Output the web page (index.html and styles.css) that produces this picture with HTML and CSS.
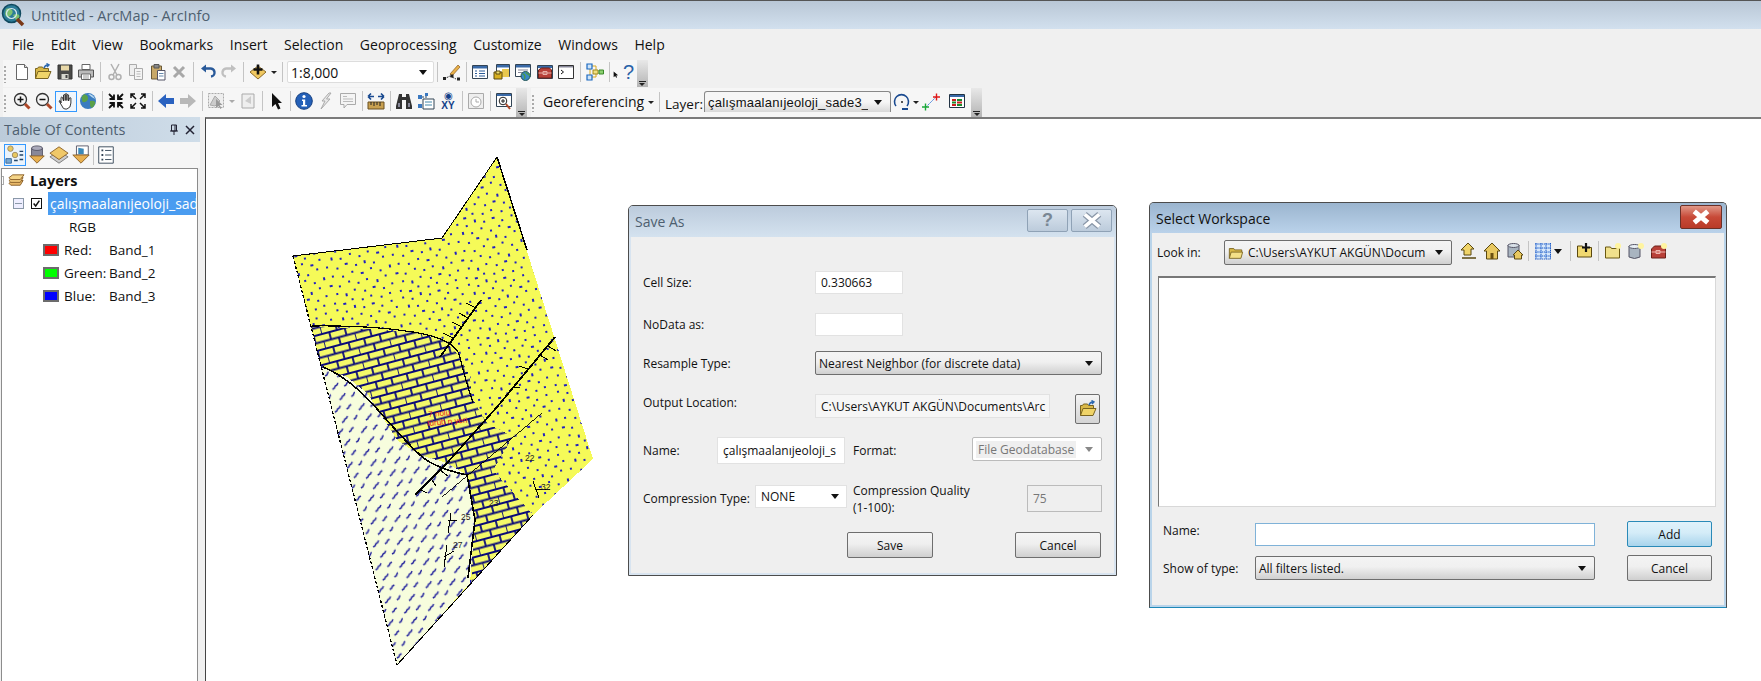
FILE: index.html
```html
<!DOCTYPE html>
<html lang="en">
<head>
<meta charset="utf-8">
<title>Untitled - ArcMap - ArcInfo</title>
<link rel="stylesheet" href="styles.css">
</head>
<body>
<svg class="defs" width="0" height="0" aria-hidden="true">
  <symbol id="i-new" viewBox="0 0 18 18"><path d="M3.500 1.500h8l3 3v12h-11z" fill="#fff" stroke="#666"/><path d="M11.500 1.500v3h3" fill="#ddd" stroke="#666"/></symbol>
  <symbol id="i-open" viewBox="0 0 18 18"><path d="M1.500 15.500v-10h2l1-1.500h4l1 1.500h5v3" fill="#d8b848" stroke="#7a6420"/><path d="M1.500 15.500l2.500-7h13l-3 7z" fill="#f0d468" stroke="#7a6420"/><path d="M10 5q1-3 4-3M12.500 .5l2.500 1.500-2 2" fill="none" stroke="#2c68b0" stroke-width="1.400"/></symbol>
  <symbol id="i-save" viewBox="0 0 18 18"><path d="M2 2h14v14H2z" fill="#4a4a48" stroke="#333"/><path d="M5 2.500h8v5H5z" fill="#e8d8a8"/><path d="M5.500 11h7v5h-7z" fill="#d8d8d0"/><path d="M9.500 12h2v3h-2z" fill="#444"/></symbol>
  <symbol id="i-print" viewBox="0 0 18 18"><path d="M5 1.500h8v5H5z" fill="#fff" stroke="#666"/><path d="M1.500 7h15v7h-15z" fill="#bbb" stroke="#555"/><path d="M4.500 11h9v5.500h-9z" fill="#fff" stroke="#666"/><path d="M6 13h6M6 15h6" stroke="#999"/></symbol>
  <symbol id="i-cut" viewBox="0 0 18 18"><g fill="none" stroke="#b0b0b0" stroke-width="1.500"><path d="M5 1l6 11M13 1L7 12"/><circle cx="5.500" cy="14" r="2.500"/><circle cx="12.500" cy="14" r="2.500"/></g></symbol>
  <symbol id="i-copy" viewBox="0 0 18 18"><path d="M2.500 1.500h7v11h-7z" fill="#eee" stroke="#aaa"/><path d="M7.500 5.500h8v11h-8z" fill="#f4f4f4" stroke="#aaa"/><path d="M9.500 8.500h4M9.500 11h4M9.500 13.500h4" stroke="#bbb"/></symbol>
  <symbol id="i-paste" viewBox="0 0 18 18"><path d="M2.500 3h10v13h-10z" fill="#c8a868" stroke="#6a5a38"/><path d="M5 1.500h5V5H5z" fill="#888" stroke="#555"/><path d="M8.500 7.500h7.500v9.500H8.500z" fill="#fff" stroke="#556"/><path d="M10 10.500h4.500M10 13h4.500" stroke="#68a"/></symbol>
  <symbol id="i-del" viewBox="0 0 18 18"><path d="M4 4l10 10M14 4L4 14" stroke="#a8a8a8" stroke-width="3"/></symbol>
  <symbol id="i-undo" viewBox="0 0 18 18"><path d="M5 5.500h6a4 4 0 0 1 1 8" fill="none" stroke="#2a5a9a" stroke-width="2.400"/><path d="M7 1.500v8L2 5.500z" fill="#2a5a9a"/></symbol>
  <symbol id="i-redo" viewBox="0 0 18 18"><path d="M13 5.500H7a4 4 0 0 0-1 8" fill="none" stroke="#c0c0c0" stroke-width="2.400"/><path d="M11 1.500v8l5-4z" fill="#c0c0c0"/></symbol>
  <symbol id="i-add" viewBox="0 0 18 18"><path d="M1 9l8-6 8 6-8 7z" fill="#f0c860" stroke="#8a6a28"/><path d="M9 1.500v10M4.500 6.500h9" stroke="#111" stroke-width="2.600"/></symbol>
  <symbol id="i-edit" viewBox="0 0 18 18"><path d="M7 11l8-9 2 2-8 9z" fill="#e8b048" stroke="#8a5a20" stroke-width=".7"/><path d="M1 16l6-3 6 3" fill="none" stroke="#333" stroke-dasharray="2 1"/><path d="M0 14h3v3H0zM7.500 11.500h3v3h-3zM14 14.500h3v3h-3z" fill="#222"/></symbol>
  <symbol id="i-toc" viewBox="0 0 18 18"><path d="M1.500 2.500h15v13h-15z" fill="#fff" stroke="#345"/><path d="M2 3h14v2.500H2z" fill="#3a6aa8"/><path d="M4 8h2M8 8h6M4 10.500h2M8 10.500h6M4 13h2M8 13h6" stroke="#2a5a98"/></symbol>
  <symbol id="i-cat" viewBox="0 0 18 18"><path d="M3.500 1.500h13v12h-13z" fill="#fff" stroke="#345"/><path d="M4 2h12v2.500H4z" fill="#3a6aa8"/><path d="M9 6h7v8H9z" fill="#e8c850"/><path d="M1 9h8v7H1z" fill="#d8b020" stroke="#5a4a10"/><path d="M3 8h4v3H3z" fill="#f0e070" stroke="#5a4a10"/></symbol>
  <symbol id="i-search" viewBox="0 0 18 18"><path d="M1.500 1.500h15v12h-15z" fill="#fff" stroke="#345"/><path d="M2 2h14v2.500H2z" fill="#3a6aa8"/><path d="M4 7h10M4 9.500h6" stroke="#889"/><circle cx="11.500" cy="13" r="4.500" fill="#3a88c8" stroke="#255"/><path d="M8.500 11c2 0 3 2 2 5M12 9c0 2 3 2 4 4" stroke="#4a9a4a" stroke-width="1.400" fill="none"/></symbol>
  <symbol id="i-box" viewBox="0 0 18 18"><path d="M1.500 2.500h15v13h-15z" fill="#fff" stroke="#345"/><path d="M2 3h14v2H2z" fill="#3a6aa8"/><path d="M2.500 7l3-2h8l2 2v8h-13z" fill="#b84038" stroke="#6a2018"/><path d="M2.500 10h13M7 8.500h4v3H7z" stroke="#e8b0a8" fill="none"/></symbol>
  <symbol id="i-py" viewBox="0 0 18 18"><path d="M1.500 2.500h15v13h-15z" fill="#fff" stroke="#333"/><path d="M2 3h14v1.500H2z" fill="#889"/><path d="M4 7l2.500 2L4 11" fill="none" stroke="#111"/></symbol>
  <symbol id="i-model" viewBox="0 0 18 18"><path d="M4 5v8M4 3h6v6M4 14h6V9" fill="none" stroke="#d8a820"/><path d="M1 1h5v5H1zM1 12h5v5H1z" fill="#cfe4f8" stroke="#1a68c0" stroke-width="1.200"/><path d="M7 7h5v4H7z" fill="#f0e080" stroke="#a08820"/><path d="M13 7h4.500v4H13z" fill="#8cd070" stroke="#3a8a2a"/></symbol>
  <symbol id="i-help" viewBox="0 0 18 18"><path d="M1 5v9l2.500-2 1.500 3 1.500-.7-1.500-3 3-.3z" fill="#111"/></symbol>
  <symbol id="i-zin" viewBox="0 0 18 18"><circle cx="7.500" cy="7.500" r="6" fill="#f4f4f4" stroke="#333" stroke-width="1.300"/><path d="M4.500 7.500h6M7.500 4.500v6" stroke="#111" stroke-width="1.500"/><path d="M12 12l4.500 4.500" stroke="#b04828" stroke-width="3"/></symbol>
  <symbol id="i-zout" viewBox="0 0 18 18"><circle cx="7.500" cy="7.500" r="6" fill="#f4f4f4" stroke="#333" stroke-width="1.300"/><path d="M4.500 7.500h6" stroke="#111" stroke-width="1.500"/><path d="M12 12l4.500 4.500" stroke="#b04828" stroke-width="3"/></symbol>
  <symbol id="i-hand" viewBox="0 0 18 18"><path d="M4 11V5.500q1-1 1.500 0L6.500 9V3q1-1 1.700 0V8.500V2q1-1 1.700 0V8.500V3q1-1 1.700 0V9l.8-3q1-.8 1.500 0v5q0 5-4 6H8q-2 0-3-3L2 9q.7-1 1.500 0z" fill="#fff" stroke="#222" stroke-width=".9"/></symbol>
  <symbol id="i-globe" viewBox="0 0 18 18"><circle cx="9" cy="9" r="8" fill="#3a7cc0"/><path d="M5 2q4 1 4 4t-3 4T3 8 2 6zM11 9q4-1 5 1t-3 6q-2-1-2-3z" fill="#5aa048"/><path d="M9 2q5 0 7 5-4-2-7-5z" fill="#b8d8f0"/></symbol>
  <symbol id="i-fin" viewBox="0 0 18 18"><path d="M2 2l5 5M7 2.500V7H2.500M16 2l-5 5M11 2.500V7h4.500M2 16l5-5M7 15.500V11H2.500M16 16l-5-5M11 15.500V11h4.500" fill="none" stroke="#111" stroke-width="1.800"/></symbol>
  <symbol id="i-fout" viewBox="0 0 18 18"><path d="M7 7L2 2M2 6V2h4M11 7l5-5M16 6V2h-4M7 11l-5 5M2 12v4h4M11 11l5 5M16 12v4h-4" fill="none" stroke="#111" stroke-width="1.500"/></symbol>
  <symbol id="i-back" viewBox="0 0 18 18"><path d="M1 9l8-7v4h8v6H9v4z" fill="#2a62c0"/></symbol>
  <symbol id="i-fwd" viewBox="0 0 18 18"><path d="M17 9L9 2v4H1v6h8v4z" fill="#b8b8b8"/></symbol>
  <symbol id="i-sel" viewBox="0 0 18 18"><path d="M1.500 1.500h15v14h-15z" fill="#eee" stroke="#aaa" stroke-dasharray="2 1"/><path d="M3 13l5-9 5 5-5 5z" fill="#ccc" stroke="#aaa"/><path d="M9 7v9l2.500-2 2 3 1-1-2-3h3z" fill="#999"/></symbol>
  <symbol id="i-gbox" viewBox="0 0 18 18"><path d="M3 2h12v14H3z" fill="#eee" stroke="#aaa"/><path d="M6 9l6-5v8z" fill="#ccc"/></symbol>
  <symbol id="i-arrow" viewBox="0 0 18 18"><path d="M5 1v14l3.500-3 2.500 5.500 2.500-1-2.500-5.500H15z" fill="#111"/></symbol>
  <symbol id="i-info" viewBox="0 0 18 18"><circle cx="9" cy="9" r="8.300" fill="#2460b8" stroke="#164080"/><circle cx="9" cy="4.500" r="1.600" fill="#fff"/><path d="M7 7.500h3.200V13H12v1.500H6.500V13H8V9H7z" fill="#fff"/></symbol>
  <symbol id="i-flash" viewBox="0 0 18 18"><path d="M12 1L5 9h3l-4 8 9-10H9.500L14 1z" fill="#e8e8e8" stroke="#aaa"/></symbol>
  <symbol id="i-html" viewBox="0 0 18 18"><path d="M1.500 1.500h15v11H8l-3 3.500v-3.500H1.500z" fill="#f4f4f4" stroke="#aaa"/><path d="M4 4.500h4M4 7h10M4 9.500h10" stroke="#bbb"/></symbol>
  <symbol id="i-measure" viewBox="0 0 18 18"><path d="M1 4.500h6M1 4.500l3-3M1 4.500l3 3M17 4.500h-6M17 4.500l-3-3M17 4.500l-3 3" fill="none" stroke="#1a4a90" stroke-width="1.700"/><path d="M1 10h16v7H1z" fill="#c8a050" stroke="#6a5020"/><path d="M4 10v3M7 10v4M10 10v3M13 10v4" stroke="#222"/></symbol>
  <symbol id="i-find" viewBox="0 0 18 18"><path d="M4 2h3v3h4V2h3l3 12v3h-6V8H7v9H1v-3z" fill="#333"/><path d="M3 11h2v4H3zM13 11h2v4h-2z" fill="#889"/></symbol>
  <symbol id="i-route" viewBox="0 0 18 18"><path d="M5 5h5V1" fill="none" stroke="#246" stroke-dasharray="2 1"/><path d="M6 7h11v10H6z" fill="#fff" stroke="#345"/><path d="M8 10h7M8 13h7" stroke="#48a"/><path d="M1 3h4v4H1zM1 12h4v4H1zM8 1h3v3H8z" fill="#3a78c0"/></symbol>
  <symbol id="i-time" viewBox="0 0 18 18"><path d="M1.500 1.500h15v15h-15z" fill="#eee" stroke="#aaa"/><circle cx="9" cy="10" r="5" fill="#fff" stroke="#aaa"/><path d="M9 7v3h3" fill="none" stroke="#aaa"/></symbol>
  <symbol id="i-view" viewBox="0 0 18 18"><path d="M1.500 1.500h15v13h-15z" fill="#fff" stroke="#345"/><path d="M2 2h14v2H2z" fill="#3a6aa8"/><circle cx="8" cy="9" r="3.800" fill="#fff" stroke="#222"/><path d="M6 9h4M8 7v4" stroke="#222"/><path d="M11 12l4 5" stroke="#b04828" stroke-width="2"/></symbol>
  <symbol id="i-lyrs" viewBox="0 0 18 18"><path d="M1 12l4-3h11l-3 5H3z" fill="#e8b868" stroke="#8a6028"/><path d="M1 9l4-3h11l-3 5H3z" fill="#f0c878" stroke="#8a6028"/><path d="M1 6l4-3h12l-4 5H3z" fill="#f4d488" stroke="#8a6028"/></symbol>
  <symbol id="i-tsrc" viewBox="0 0 22 22"><circle cx="6" cy="4" r="3" fill="#e8c860" stroke="#986"/><circle cx="11" cy="11" r="3" fill="#e8c860" stroke="#986"/><path d="M1 15h6v5H1z" fill="#7aa8d0" stroke="#369"/><path d="M16 7h4M16 11h4M16 16h4M10 17h4" stroke="#246" stroke-width="1.500"/></symbol>
  <symbol id="i-tdb" viewBox="0 0 22 22"><path d="M5 3h12v10H5z" fill="#889"/><ellipse cx="11" cy="3.500" rx="6" ry="2.500" fill="#aab" stroke="#556"/><path d="M5 3.500v10M17 3.500v10" stroke="#556"/><path d="M3 12h16l-8 8z" fill="#e8b050" stroke="#8a6028"/></symbol>
  <symbol id="i-tvis" viewBox="0 0 22 22"><path d="M1 13l10-6 10 6-10 7z" fill="#ccc" stroke="#777"/><path d="M1 9l10-7 10 7-10 7z" fill="#f0c868" stroke="#8a6028"/></symbol>
  <symbol id="i-tsel" viewBox="0 0 22 22"><path d="M6 1h13v10H6z" fill="#fff" stroke="#556"/><path d="M8 3l6 1v6H8z" fill="#3a88b8"/><path d="M2 11h18l-9 9z" fill="#e8b050" stroke="#8a6028"/></symbol>
  <symbol id="i-topt" viewBox="0 0 22 22"><path d="M3 2h16v18H3z" fill="#fff" stroke="#345"/><path d="M6 6h2M6 11h2M6 16h2" stroke="#345" stroke-width="2"/><path d="M10 6h7M10 11h7M10 16h7" stroke="#345"/></symbol>
  <symbol id="i-fold" viewBox="0 0 18 18"><path d="M1.500 15V4h5l1 1.500h8V8" fill="#d8b848" stroke="#7a6420"/><path d="M1.500 15l2-7h13l-2 7z" fill="#f4e088" stroke="#7a6420"/></symbol>
  <symbol id="i-up" viewBox="0 0 18 18"><path d="M8 1l6 6h-3v6H4V8H1z" fill="#f0d468" stroke="#5a4810"/><path d="M2 16h14" stroke="#5a4810" stroke-width="1.500"/></symbol>
  <symbol id="i-home" viewBox="0 0 18 18"><path d="M9 1l8 8h-2.500v8h-11V9H1z" fill="#e8c860" stroke="#5a4810"/><path d="M7.500 11h3v6h-3z" fill="#6a5010"/></symbol>
  <symbol id="i-dbh" viewBox="0 0 18 18"><path d="M2 3h11v12H2z" fill="#a8b4c0" stroke="#556"/><ellipse cx="7.500" cy="3.500" rx="5.500" ry="2" fill="#d8e0e8" stroke="#556"/><path d="M12 8l5 5h-1.500v4h-7v-4H7z" fill="#e8c860" stroke="#5a4810"/></symbol>
  <symbol id="i-grid" viewBox="0 0 18 18"><path d="M1.500 1.500h15v15h-15z" fill="#d8e8fa"/><path d="M1 2h16M1 6h16M1 10h16M1 14h16M1 17h16M2 1v16M7 1v16M12 1v16M16.500 1v16" stroke="#1a5ac8" stroke-dasharray="1.500 .7"/></symbol>
  <symbol id="i-nf" viewBox="0 0 18 18"><path d="M1.500 15V4h5l1 1.500h8V15z" fill="#f0d870" stroke="#5a4810"/><path d="M10 1v9M6 5.500h8" stroke="#111" stroke-width="2.200"/></symbol>
  <symbol id="i-fstar" viewBox="0 0 18 18"><path d="M1.500 16V5h5l1 1.500h8V16z" fill="#f0e08c" stroke="#6a5810"/><circle cx="14" cy="4" r="3" fill="#fff4a0"/></symbol>
  <symbol id="i-dstar" viewBox="0 0 18 18"><path d="M2 4h11v11q-5.500 3-11 0z" fill="#a8b4c0" stroke="#556"/><ellipse cx="7.500" cy="4.500" rx="5.500" ry="2" fill="#e8eef4" stroke="#556"/><circle cx="14" cy="4" r="3" fill="#fff4a0"/></symbol>
  <symbol id="i-tstar" viewBox="0 0 18 18"><path d="M1.500 7l3-3h8l3 3v9h-14z" fill="#b84038" stroke="#6a2018"/><path d="M1.500 10h14M6 8.500h4v3H6z" stroke="#f0b8b0" fill="none"/><circle cx="14" cy="4" r="3" fill="#fff4a0"/></symbol>
</svg>

<div class="app">
  <header class="titlebar">
    <svg class="logo" viewBox="0 0 24 24"><circle cx="10.500" cy="10.500" r="9" fill="#2c7c98" stroke="#104a60" stroke-width="1.500"/><path d="M5 6q4-2 6 1t-2 6-5-2zM12 12q4-2 6 0t-3 5z" fill="#7cc070"/><circle cx="10.500" cy="10.500" r="5" fill="none" stroke="#d8e8f0" stroke-width="1.200"/><path d="M16 16l6 6" stroke="#7a3818" stroke-width="3.500"/></svg>
    <span class="titletext">Untitled - ArcMap - ArcInfo</span>
  </header>
  <nav class="menubar">
    <span>File</span><span>Edit</span><span>View</span><span>Bookmarks</span><span>Insert</span><span>Selection</span><span>Geoprocessing</span><span>Customize</span><span>Windows</span><span>Help</span>
  </nav>
  <div class="toolrow">
    <div class="tb">
      <i class="grip"></i>
      <span class="ti"><svg><use href="#i-new"/></svg></span>
      <span class="ti"><svg><use href="#i-open"/></svg></span>
      <span class="ti"><svg><use href="#i-save"/></svg></span>
      <span class="ti"><svg><use href="#i-print"/></svg></span>
      <i class="sep"></i>
      <span class="ti"><svg><use href="#i-cut"/></svg></span>
      <span class="ti"><svg><use href="#i-copy"/></svg></span>
      <span class="ti"><svg><use href="#i-paste"/></svg></span>
      <span class="ti"><svg><use href="#i-del"/></svg></span>
      <i class="sep"></i>
      <span class="ti"><svg><use href="#i-undo"/></svg></span>
      <span class="ti"><svg><use href="#i-redo"/></svg></span>
      <i class="sep"></i>
      <span class="ti"><svg><use href="#i-add"/></svg></span>
      <i class="dd"></i>
      <i class="sep"></i>
      <div class="scale"><span>1:8,000</span><i class="tri"></i></div>
      <i class="sep"></i>
      <span class="ti"><svg><use href="#i-edit"/></svg></span>
      <i class="sep"></i>
      <span class="ti"><svg><use href="#i-toc"/></svg></span>
      <span class="ti"><svg><use href="#i-cat"/></svg></span>
      <span class="ti"><svg><use href="#i-search"/></svg></span>
      <span class="ti"><svg><use href="#i-box"/></svg></span>
      <span class="ti"><svg><use href="#i-py"/></svg></span>
      <i class="sep"></i>
      <span class="ti"><svg><use href="#i-model"/></svg></span>
      <i class="sep"></i>
      <span class="ti helpti"><svg><use href="#i-help"/></svg><b>?</b></span>
      <i class="endgrip"></i>
    </div>
  </div>
  <div class="toolrow second">
    <div class="tb tb2">
      <i class="grip"></i>
      <span class="ti"><svg><use href="#i-zin"/></svg></span>
      <span class="ti"><svg><use href="#i-zout"/></svg></span>
      <span class="ti on"><svg><use href="#i-hand"/></svg></span>
      <span class="ti"><svg><use href="#i-globe"/></svg></span>
      <i class="sep"></i>
      <span class="ti"><svg><use href="#i-fin"/></svg></span>
      <span class="ti"><svg><use href="#i-fout"/></svg></span>
      <i class="sep"></i>
      <span class="ti"><svg><use href="#i-back"/></svg></span>
      <span class="ti"><svg><use href="#i-fwd"/></svg></span>
      <i class="sep"></i>
      <span class="ti"><svg><use href="#i-sel"/></svg></span>
      <i class="dd off"></i>
      <span class="ti"><svg><use href="#i-gbox"/></svg></span>
      <i class="sep"></i>
      <span class="ti"><svg><use href="#i-arrow"/></svg></span>
      <i class="sep"></i>
      <span class="ti"><svg><use href="#i-info"/></svg></span>
      <span class="ti"><svg><use href="#i-flash"/></svg></span>
      <span class="ti"><svg><use href="#i-html"/></svg></span>
      <i class="sep"></i>
      <span class="ti"><svg><use href="#i-measure"/></svg></span>
      <i class="sep"></i>
      <span class="ti"><svg><use href="#i-find"/></svg></span>
      <span class="ti"><svg><use href="#i-route"/></svg></span>
      <span class="ti xy"><b class="xytop">◉</b><b>XY</b></span>
      <i class="sep"></i>
      <span class="ti"><svg><use href="#i-time"/></svg></span>
      <i class="sep"></i>
      <span class="ti"><svg><use href="#i-view"/></svg></span>
      <i class="endgrip"></i>
    </div>
    <div class="tb tb3">
      <i class="grip"></i>
      <span class="georef">Georeferencing</span>
      <i class="dd"></i>
      <i class="sep"></i>
      <span class="layerlab">Layer:</span>
      <div class="layercombo"><span>çalışmaalanıjeoloji_sade3_</span><i class="tri"></i></div>
      <svg class="ic18 rot" viewBox="0 0 18 18"><path d="M3 13A7 7 0 1 1 14 13" fill="none" stroke="#1a4a90" stroke-width="1.600"/><path d="M9 16h6" stroke="#1a4a90" stroke-width="2"/><circle cx="9" cy="9" r="1" fill="#222"/></svg>
      <i class="dd"></i>
      <svg class="ic18 ctrl" viewBox="0 0 18 18"><path d="M4 14L14 4" stroke="#3a78d8" stroke-dasharray="2 1"/><path d="M0 14h7M3.500 10.500v7" stroke="#1ca838" stroke-width="1.400"/><path d="M11 4h7M14.500 .5v7" stroke="#e01818" stroke-width="1.400"/></svg>
      <svg class="ic18 lnk" viewBox="0 0 18 18"><path d="M1.500 1.500h15v13h-15z" fill="#fff" stroke="#234"/><path d="M2 2h14v2H2z" fill="#3a6aa8"/><path d="M4 6h4v2H4zM4 11h4v2H4z" fill="#c82020"/><path d="M9 6h5v2H9zM9 11h5v2H9z" fill="#1a8a2a"/><path d="M4 8.500h4v2H4z" fill="#1a8a2a"/><path d="M9 8.500h5v2H9z" fill="#c82020"/></svg>
      <i class="endgrip"></i>
    </div>
  </div>

  <main class="workspace">
    <aside class="toc">
      <div class="tochead"><span>Table Of Contents</span>
        <svg class="pin" viewBox="0 0 12 12"><path d="M3.500 1h5v6h-5zM2 7h8M6 7v4M7 1v6" fill="none" stroke="#223"/></svg>
        <svg class="tclose" viewBox="0 0 12 12"><path d="M2 2l8 8M10 2l-8 8" stroke="#223" stroke-width="1.500"/></svg>
      </div>
      <div class="tocbar">
        <span class="tt on"><svg><use href="#i-tsrc"/></svg></span>
        <span class="tt"><svg><use href="#i-tdb"/></svg></span>
        <span class="tt"><svg><use href="#i-tvis"/></svg></span>
        <span class="tt"><svg><use href="#i-tsel"/></svg></span>
        <i class="sep"></i>
        <span class="tt"><svg><use href="#i-topt"/></svg></span>
      </div>
      <div class="tree">
        <div class="trow rlayers"><i class="brk"></i><svg class="lyicon"><use href="#i-lyrs"/></svg><b>Layers</b></div>
        <div class="trow rlayer"><i class="minus"></i><i class="check"><svg viewBox="0 0 11 11"><path d="M2 5.500l2.500 3L9 2" fill="none" stroke="#111" stroke-width="1.800"/></svg></i><span class="selname">çalışmaalanıjeoloji_sad</span></div>
        <div class="trow rrgb">RGB</div>
        <div class="trow rband"><i class="sw red"></i><span class="bl">Red:</span><span>Band_1</span></div>
        <div class="trow rband"><i class="sw green"></i><span class="bl">Green:</span><span>Band_2</span></div>
        <div class="trow rband"><i class="sw blue"></i><span class="bl">Blue:</span><span>Band_3</span></div>
      </div>
    </aside>

    <section class="map">
      <svg class="mapart" viewBox="205 118 1556 563" aria-label="Geology map">
        <defs>
          <pattern id="p-dots" width="67" height="61" patternUnits="userSpaceOnUse" patternTransform="rotate(-11)">
            <rect width="67" height="61" fill="#f5fa58"/>
            <g fill="#2020c0">
              <rect x="3" y="2" width="2" height="2"/><rect x="12" y="5" width="2" height="2"/><rect x="21" y="1" width="2" height="3"/><rect x="30" y="4" width="2" height="2"/><rect x="39" y="2" width="3" height="2"/><rect x="48" y="6" width="2" height="2"/><rect x="58" y="3" width="2" height="2"/>
              <rect x="7" y="11" width="2" height="3"/><rect x="16" y="13" width="2" height="2"/><rect x="26" y="10" width="2" height="2"/><rect x="35" y="14" width="2" height="2"/><rect x="44" y="11" width="2" height="2"/><rect x="53" y="14" width="3" height="2"/><rect x="62" y="10" width="2" height="2"/>
              <rect x="1" y="19" width="2" height="2"/><rect x="11" y="22" width="2" height="2"/><rect x="20" y="19" width="3" height="2"/><rect x="30" y="22" width="2" height="2"/><rect x="39" y="20" width="2" height="3"/><rect x="48" y="23" width="2" height="2"/><rect x="58" y="19" width="2" height="2"/>
              <rect x="5" y="29" width="2" height="2"/><rect x="15" y="31" width="2" height="2"/><rect x="25" y="28" width="2" height="2"/><rect x="34" y="31" width="3" height="2"/><rect x="44" y="28" width="2" height="2"/><rect x="53" y="32" width="2" height="2"/><rect x="63" y="29" width="2" height="3"/>
              <rect x="1" y="38" width="3" height="2"/><rect x="10" y="40" width="2" height="2"/><rect x="20" y="37" width="2" height="2"/><rect x="29" y="40" width="2" height="2"/><rect x="38" y="38" width="2" height="2"/><rect x="48" y="41" width="2" height="3"/><rect x="57" y="38" width="2" height="2"/>
              <rect x="6" y="47" width="2" height="2"/><rect x="15" y="49" width="2" height="3"/><rect x="24" y="46" width="2" height="2"/><rect x="34" y="49" width="2" height="2"/><rect x="43" y="47" width="3" height="2"/><rect x="53" y="50" width="2" height="2"/><rect x="62" y="47" width="2" height="2"/>
              <rect x="2" y="56" width="2" height="2"/><rect x="11" y="58" width="3" height="2"/><rect x="20" y="55" width="2" height="2"/><rect x="30" y="57" width="2" height="2"/><rect x="39" y="55" width="2" height="2"/><rect x="49" y="58" width="2" height="2"/><rect x="58" y="56" width="2" height="2"/>
            </g>
          </pattern>
          <pattern id="p-brick" width="32" height="15" patternUnits="userSpaceOnUse" patternTransform="rotate(-15)">
            <rect width="32" height="15" fill="#f4f96a"/>
            <path d="M0 1h32M0 8.500h32M8 1v7.500M24 1v7.500M0 8.500V15M16 8.500V15" stroke="#0a0a78" stroke-width="1.800" fill="none"/>
          </pattern>
          <pattern id="p-wave" width="24" height="23" patternUnits="userSpaceOnUse" patternTransform="rotate(-6)">
            <rect width="24" height="23" fill="#f7fddd"/>
            <path d="M2 8l2-1 1-2 2-1 1-2M14 6l2-1 1-2 2-1M8 19l2-1 1-2 2-1 1-2M20 17l2-1 1-2 1-1" stroke="#22229c" stroke-width="1.500" fill="none"/>
          </pattern>
        </defs>
        <path class="sh" d="M497 157L593 459 533 515 397 665 293 256 442 238z" fill="url(#p-dots)"/>
        <path class="sh" d="M311 326L413 332 443 340 460 357 470 377 473 400 487 423 513 437 493 470 533 515 472 583 467 475 447 463 420 455 397 440 378 410 367 393 347 377 321 367z" fill="url(#p-brick)"/>
        <path class="sh" d="M321 367L347 377 367 393 378 410 397 440 420 455 447 463 467 475 475 520 470 583 397 665z" fill="url(#p-wave)"/>
        <g class="sh" fill="none" stroke="#000">
          <path d="M497 157L527 250" stroke-width="1.500"/>
          <path d="M293 256L442 238 497 157" stroke-width="1"/>
          <path d="M293 256L397 665" stroke-width="1.300" stroke-dasharray="3 2"/>
          <path d="M397 665L533 515" stroke-width="1"/>
          <path d="M312 326Q370 325 413 332T460 357 473 403" stroke-width="1.200"/>
          <path d="M323 367Q350 378 378 410T420 455 467 475L475 520 468 578" stroke-width="1.600"/>
          <path d="M481 300L440 357M555 337L497 407 447 463 415 495" stroke-width="1.800"/>
          <path d="M542 413L442 497" stroke-width=".9"/>
          <path d="M476 308l-10-5M468 318l-9-5M462 327l-10-5M453 338l-10-5M548 346l8 5M540 355l8 5M528 369l-9-3M512 387l8 0M440 470l8 6M432 480l4 6M421 490l6 3" stroke-width="1"/>
          <path d="M451 513l-3 20M448 520l9 0M447 545l-3 22M444 557l10-6M533 481l6 17M536 489l14 0" stroke-width="1"/>
        </g>
        <text class="mred" x="428" y="417">7 nolu</text>
        <text class="mred" x="427" y="426">türüb n yeri</text>
        <text class="mblk" x="461" y="520">25</text>
        <text class="mblk" x="453" y="548">27</text>
        <text class="mblk" x="525" y="461">22</text>
        <text class="mblk" x="541" y="490">32</text>
        <text class="mblk" x="489" y="506">23</text>
      </svg>
    </section>
  </main>

  <div class="win saveas">
    <div class="wtitle"><span>Save As</span>
      <span class="wbtn">?</span>
      <span class="wbtn"><svg viewBox="0 0 18 14"><path d="M3 2l12 10M15 2L3 12" stroke="#8a97a8" stroke-width="5"/><path d="M3 2l12 10M15 2L3 12" stroke="#fff" stroke-width="3"/></svg></span>
    </div>
    <div class="wbody">
      <div class="r r1"><label class="w172">Cell Size:</label><div class="field w88">0.330663</div></div>
      <div class="r r2"><label class="w172">NoData as:</label><div class="field w88"></div></div>
      <div class="r r3"><label class="w172">Resample Type:</label><div class="combo w287"><span>Nearest Neighbor (for discrete data)</span><i class="tri"></i></div></div>
      <div class="r r4"><label class="w172 up">Output Location:</label><div class="field w235 ro">C:\Users\AYKUT AKGÜN\Documents\Arc</div><div class="browse"><svg><use href="#i-open"/></svg></div></div>
      <div class="r r5"><label class="w74">Name:</label><div class="field w128 tall">çalışmaalanıjeoloji_s</div><label class="w119 ml8">Format:</label><div class="combo w130 dis"><span>File Geodatabase</span><i class="tri"></i></div></div>
      <div class="r r6"><label class="w112">Compression Type:</label><div class="field w92 cbx"><span>NONE</span><i class="tri"></i></div><label class="w174 ml6">Compression Quality<br>(1-100):</label><div class="field w75 dim">75</div></div>
      <div class="r r7"><button class="btn">Save</button><button class="btn">Cancel</button></div>
    </div>
  </div>

  <div class="win selws">
    <div class="wtitle"><span>Select Workspace</span><span class="redx"><svg viewBox="0 0 20 16"><path d="M4 3l12 10M16 3L4 13" stroke="#fff" stroke-width="4.500"/></svg></span></div>
    <div class="wbody">
      <div class="s s1"><label class="w67">Look in:</label>
        <div class="combo w228"><svg class="cfold"><use href="#i-fold"/></svg><span>C:\Users\AYKUT AKGÜN\Docum</span><i class="tri"></i></div>
        <span class="wi first"><svg><use href="#i-up"/></svg></span>
        <span class="wi"><svg><use href="#i-home"/></svg></span>
        <span class="wi"><svg><use href="#i-dbh"/></svg></span>
        <i class="sep"></i>
        <span class="wi"><svg><use href="#i-grid"/></svg></span>
        <i class="tri solo"></i>
        <i class="sep"></i>
        <span class="wi"><svg><use href="#i-nf"/></svg></span>
        <i class="sep"></i>
        <span class="wi"><svg><use href="#i-fstar"/></svg></span>
        <span class="wi"><svg><use href="#i-dstar"/></svg></span>
        <span class="wi"><svg><use href="#i-tstar"/></svg></span>
      </div>
      <div class="list"></div>
      <div class="s s2"><label class="w91 lift">Name:</label><div class="field w340 focus"></div><button class="btn add">Add</button></div>
      <div class="s s3"><label class="w91">Show of type:</label><div class="combo w340"><span>All filters listed.</span><i class="tri"></i></div><button class="btn can">Cancel</button></div>
    </div>
  </div>
</div>
</body>
</html>
```
FILE: styles.css
```css
* { box-sizing: border-box; }
html, body { margin: 0; height: 681px; overflow: hidden; }
body { font-family: "Open Sans", "Noto Sans", sans-serif; background: #f0f0f0; color: #111; }
.defs { position: absolute; }
i { display: block; font-style: normal; }
.app { position: relative; width: 1761px; height: 681px; overflow: hidden; display: flex; flex-direction: column; }

.titlebar { height: 29px; flex: none; display: flex; align-items: center; gap: 6px; padding-left: 1px; border-top: 1px solid #555; background: linear-gradient(#b9c7d6, #d2e0ee); }
.logo { width: 24px; height: 24px; }
.titletext { font-size: 14.5px; color: #4e5f70; }

.menubar { height: 31px; flex: none; display: flex; align-items: center; gap: 16.6px; padding-left: 12px; font-size: 14px; color: #111; }

.toolrow { height: 27px; flex: none; display: flex; padding-left: 3px; }
.toolrow.second { height: 30px; margin-top: 0; padding-top: 1px; gap: 4px; }
.tb { display: flex; align-items: center; background: #f6f6f6; height: 100%; }
.grip { width: 8px; height: 18px; margin-left: 0; background: radial-gradient(circle, #aaa 1px, transparent 1.2px) 0 0 / 4px 4px repeat-y; }
.ti { width: 21.5px; height: 21px; flex: none; display: flex; align-items: center; justify-content: center; margin-top: -3px; }
.tb2 .ti { width: 22px; }
.ti svg { width: 18px; height: 18px; }
.ti.on { background: #f0f6fc; border: 1px solid #3399ff; }
.sep { width: 7px; height: 20px; flex: none; margin-top: -3px; background: linear-gradient(#c4c4c4, #c4c4c4) center / 1px 100% no-repeat; }
.tb2 .sep { width: 6px; }
.dd { width: 10px; height: 18px; flex: none; position: relative; margin-top: -3px; }
.dd::after { content: ""; position: absolute; left: 2px; top: 8px; border: 3px solid transparent; border-top: 3px solid #222; border-bottom: 0; }
.dd.off::after { border-top-color: #aaa; }
.scale { width: 147px; height: 22px; flex: none; margin: -3px 0 0 1.5px; background: #fff; border: 1px solid #ddd; border-radius: 2px; display: flex; align-items: center; justify-content: space-between; padding: 0 6px 0 3px; font-size: 14px; }
.tri { width: 0; height: 0; flex: none; border-left: 4.5px solid transparent; border-right: 4.5px solid transparent; border-top: 5px solid #111; }
.endgrip { width: 11px; height: 100%; flex: none; margin-left: 2.5px; position: relative; background: linear-gradient(#e8e8e8, #b4b4b4); }
.tb2 .endgrip { margin-left: 1px; }
.endgrip::after { content: ""; position: absolute; left: 2px; bottom: 5px; width: 7px; height: 1px; background: #222; }
.endgrip::before { content: ""; position: absolute; left: 2.5px; bottom: 1px; border: 3px solid transparent; border-top: 3px solid #222; border-bottom: 0; }
.helpti { position: relative; justify-content: flex-start; }
.helpti svg { width: 12px; height: 12px; margin-top: 4px; }
.helpti b { font: 400 20px "Liberation Sans", sans-serif; color: #2a62a8; margin-left: -1px; }
.xy { flex-direction: column; color: #123e88; font: 700 10px/10px "Liberation Sans", sans-serif; }
.xytop { font-size: 10px; font-weight: 400; }

.tb3 { width: 451px; }
.tb3 .sep, .tb3 .dd { margin-top: -2px; }
.georef { font-size: 14px; margin: -2px 0 0 4px; width: 103px; flex: none; }
.layerlab { font-size: 13.5px; margin: 2px 0 0 2px; width: 39px; flex: none; white-space: nowrap; }
.layercombo { width: 187px; height: 21px; flex: none; align-self: flex-start; margin-top: 3px; display: flex; align-items: center; justify-content: space-between; padding: 0 8px 0 3px; border: 1px solid #888; border-bottom: 0; border-radius: 3px 3px 0 0; background: linear-gradient(#f6f6f6 50%, #d8d8d8); font: 13px "Liberation Sans", sans-serif; letter-spacing: .2px; white-space: nowrap; }
.layercombo span { width: 160px; overflow: hidden; }
.ic18 { width: 18px; height: 18px; flex: none; margin-top: -2px; }
.rot { margin-left: 2px; }
.ctrl { margin-left: 1px; }
.lnk { margin-left: 8px; }
.tb3 .endgrip { margin-left: auto; }

.workspace { flex: 1; display: flex; min-height: 0; }
.toc { width: 205px; flex: none; display: flex; flex-direction: column; }
.tochead { width: 200px; height: 25px; flex: none; background: linear-gradient(90deg, #bccbda, #cfdde9); display: flex; align-items: center; padding: 0 4px; font-size: 14.5px; color: #4e5f70; }
.tochead span { flex: 1; }
.pin { width: 12px; height: 12px; margin-right: 4px; }
.tclose { width: 12px; height: 12px; }
.tocbar { width: 200px; height: 26px; flex: none; display: flex; align-items: center; padding-left: 4px; background: #f6f6f6; }
.tt { width: 22px; height: 22px; flex: none; display: flex; align-items: center; justify-content: center; }
.tt svg { width: 20px; height: 20px; }
.tt.on { background: #eaf3fc; border: 1px solid #3399ff; }
.tocbar .sep { width: 3px; margin-top: 0; }
.tree { width: 197px; margin-left: 1px; flex: 1; background: #fff; border: 1px solid #8c8c8c; border-bottom: 0; font-size: 13.5px; overflow: hidden; }
.trow { height: 23px; display: flex; align-items: center; white-space: nowrap; }
.rlayers { font-size: 14.5px; }
.rlayers b { margin-left: 5px; }
.brk { width: 2px; height: 9px; border: 1px solid #aaa; border-left: 0; margin-right: 4px; }
.lyicon { width: 17px; height: 17px; }
.minus { width: 11px; height: 11px; margin-left: 11px; border: 1px solid #8a98a8; background: linear-gradient(90deg, #8a98a8, #8a98a8) center / 7px 1px no-repeat, #eef; }
.check { width: 11px; height: 11px; margin-left: 7px; border: 1px solid #111; background: #fff; }
.check svg { display: block; width: 9px; height: 9px; }
.selname { margin-left: 6px; width: 148px; height: 23px; padding-left: 2px; background: #4a9cf0; color: #fff; line-height: 23px; overflow: hidden; font-size: 14px; }
.rrgb { padding-left: 67px; }
.rband { padding-left: 41px; }
.sw { width: 16px; height: 12px; border: 2px solid #6c6c6c; margin-right: 5px; }
.red { background: #f00; } .green { background: #0f0; } .blue { background: #00f; }
.bl { width: 45px; }

.map { flex: 1; position: relative; background: #fff; border-top: 2px solid #7a7a7a; border-left: 1px solid #444; }
.mapart { position: absolute; left: -1px; top: -1px; width: 1556px; height: 563px; display: block; }
.sh { shape-rendering: crispEdges; }
.mred { font: 8px "Liberation Sans", sans-serif; fill: #e81818; transform-box: fill-box; transform: rotate(-5deg); }
.mblk { font: 8.5px "Liberation Sans", sans-serif; fill: #222; }

.win { position: absolute; display: flex; flex-direction: column; border: 1px solid #4c4c4c; border-radius: 5px 5px 0 0; font-size: 12px; padding: 0 2px 2px; color: #111; }
.saveas { left: 628px; top: 205px; width: 489px; height: 371px; background: #d8e4f0; }
.selws { left: 1149px; top: 202px; width: 578px; height: 406px; background: #b9d4ea; border-bottom-color: #1e88b8; }
.wtitle { flex: none; display: flex; align-items: center; margin: 0 -2px; padding: 0 4px 0 6px; border-radius: 4px 4px 0 0; }
.wtitle > span:first-child { flex: 1; }
.saveas .wtitle { height: 31px; background: linear-gradient(#bccbdc, #d4e2ef); font-size: 14px; color: #4e5f70; gap: 3px; }
.selws .wtitle { height: 30px; background: linear-gradient(#9bb5cf, #bad2ea); font-size: 14px; color: #111; }
.wbtn { width: 41px; height: 23px; margin-top: -2px; border: 1px solid #8fa2b6; border-radius: 2px; background: linear-gradient(#dce6f0, #bccbdb); display: flex; align-items: center; justify-content: center; font: 700 18px "Liberation Sans", sans-serif; color: #7a8794; }
.wbtn svg { width: 22px; height: 17px; }
.redx { width: 42px; height: 24px; border: 1px solid #6a3028; border-radius: 2px; background: linear-gradient(#e09888, #c84a38 50%, #b83a28); display: flex; align-items: center; justify-content: center; margin-top: -2px; }
.redx svg { width: 26px; height: 18px; }
.wbody { flex: 1; background: #efefef; }
label { display: block; flex: none; }
.r { display: flex; align-items: center; padding-left: 12px; }
.field { background: #fff; border: 1px solid #e2e2e2; flex: none; height: 100%; padding-left: 5px; display: flex; align-items: center; white-space: nowrap; overflow: hidden; }
.combo { flex: none; height: 100%; display: flex; align-items: center; justify-content: space-between; padding: 0 8px 0 3px; border: 1px solid #6e6e6e; border-radius: 2px; background: linear-gradient(#f4f4f4, #f0f0f0 45%, #d0d0d0); white-space: nowrap; overflow: hidden; }
.w172 { width: 172px; } .w74 { width: 74px; } .w119 { width: 119px; } .w112 { width: 112px; } .w174 { width: 174px; }
.w88 { width: 88px; } .w287 { width: 287px; } .w235 { width: 235px; } .w128 { width: 128px; } .w130 { width: 130px; } .w92 { width: 92px; } .w75 { width: 75px; }
.ml8 { margin-left: 8px; } .ml6 { margin-left: 6px; }
.r1 { height: 23px; margin-top: 34px; }
.r2 { height: 23px; margin-top: 19px; }
.r3 { height: 24px; margin-top: 15px; }
.r4 { height: 30px; margin-top: 19px; }
.r4 .field { height: 24px; margin-top: -6px; }
.up { margin-top: -14px; }
.ro { background: #f6f6f6; }
.browse { width: 25px; height: 30px; margin-left: 25px; flex: none; border: 1px solid #6e6e6e; border-radius: 2px; background: linear-gradient(#f4f4f4, #d4d4d4); display: flex; align-items: center; justify-content: center; }
.browse svg { width: 18px; height: 18px; }
.r5 { height: 27px; margin-top: 13px; }
.r5 .combo { height: 24px; align-self: flex-start; }
.dis { background: #fff; border-color: #bbb; color: #777; }
.dis .tri { border-top-color: #888; }
.dis span { background: #efefef; padding: 0 2px; }
.r6 { height: 27px; margin-top: 21px; }
.cbx { justify-content: space-between; height: 23px; align-self: flex-start; padding-right: 7px; }
.dim { background: #efefef; border-color: #bbb; color: #777; }
.r7 { height: 26px; margin-top: 20px; padding-left: 216px; gap: 82px; }
.btn { width: 86px; height: 26px; padding: 0; border: 1px solid #6e6e6e; border-radius: 2px; background: linear-gradient(#f4f4f4, #efefef 45%, #cfcfcf); font: inherit; color: #111; }

.s { display: flex; align-items: center; }
.s1 { height: 25px; margin: 7px 0 0 5px; }
.w67 { width: 67px; }
.w228 { width: 228px; }
.cfold { width: 16px; height: 16px; flex: none; }
.combo.w228 span { flex: 1; margin-left: 4px; overflow: hidden; }
.wi { width: 23px; height: 20px; flex: none; display: flex; align-items: center; justify-content: center; margin-top: -3px; }
.wi svg { width: 18px; height: 18px; }
.wi.first { margin-left: 5px; }
.selws .sep { width: 1px; height: 20px; margin: -3px 2px 0; }
.tri.solo { margin: -3px 6px 0 0; }
.list { width: 558px; height: 231px; margin: 11px 0 0 6px; background: #fff; border: 1px solid #d8d8d8; border-top: 2px solid #777; border-left: 1px solid #777; }
.w91 { width: 92px; }
.lift { margin-top: -8px; }
.w340 { width: 340px; }
.s2 { height: 26px; margin: 14px 0 0 11px; }
.s2 .field { height: 23px; border: 1px solid #7fb2d8; }
.s3 { height: 26px; margin: 8px 0 0 11px; }
.s3 .combo { height: 24px; }
.selws .btn { margin-left: 32px; width: 85px; }
.add { border-color: #2a8ab8 !important; background: linear-gradient(#e0f2fb, #d4ecf8 45%, #a8d4ec) !important; }
```
